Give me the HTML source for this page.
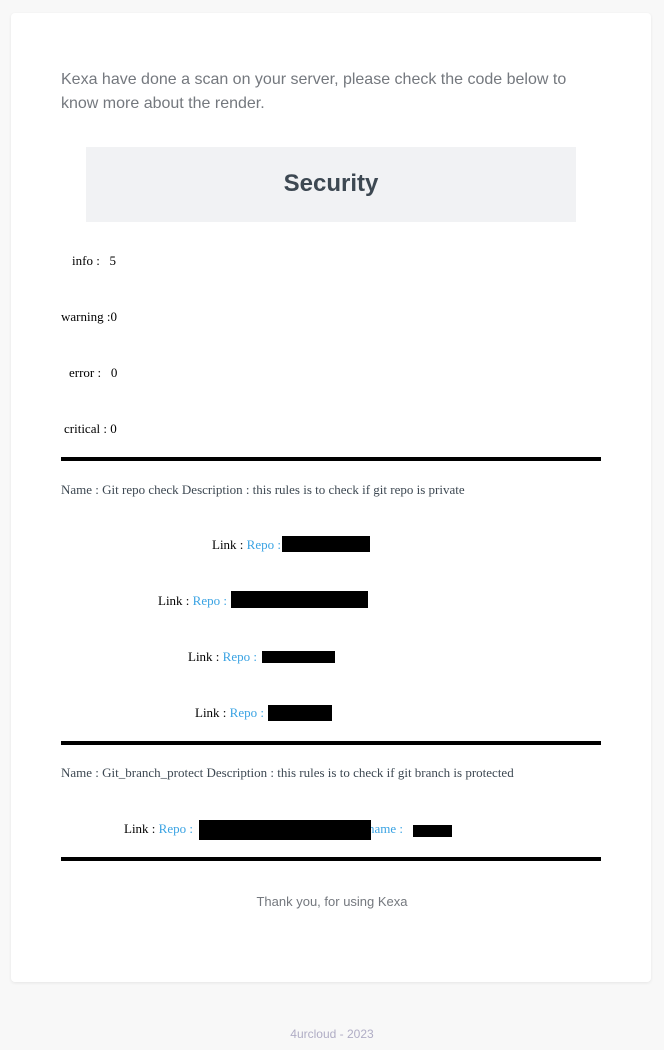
<!DOCTYPE html>
<html><head><meta charset="utf-8"><style>
body{margin:0;width:664px;height:1050px;background:#f8f8f8;position:relative;overflow:hidden;font-family:"Liberation Serif",serif}
.card{position:absolute;left:11px;top:13px;width:640px;height:969px;background:#fff;border-radius:4px;box-shadow:0 1px 3px rgba(0,0,0,.08)}
.a{position:absolute;white-space:nowrap;line-height:1}
.s{font-family:"Liberation Sans",sans-serif}
.t{font-size:13px;color:#000}
.g{font-size:13px;color:#3d4852}
.b{color:#3aa3e3}
.hr{position:absolute;left:61px;width:540px;height:4px;background:#000}
</style></head><body>
<div class="card"></div>
<div class="a s" style="left:61px;top:68px;font-size:16px;color:#74787e;line-height:24px">Kexa have done a scan on your server, please check the code below to<br>know more about the render.</div>
<div class="a" style="left:86px;top:147px;width:490px;height:75px;background:#f1f2f4"></div>
<div class="a s" style="left:86px;top:172px;width:490px;text-align:center;font-size:24px;font-weight:bold;color:#3d4852">Security</div>
<div class="a t" style="left:72px;top:254px">info : &nbsp; 5</div>
<div class="a t" style="left:61px;top:310px">warning :0</div>
<div class="a t" style="left:69px;top:366px">error : &nbsp; 0</div>
<div class="a t" style="left:64px;top:422px">critical : 0</div>
<div class="hr" style="top:457px"></div>
<div class="a g" style="left:61px;top:483px">Name : Git repo check Description : this rules is to check if git repo is private</div>
<div class="a t" style="left:212px;top:538px">Link : <span class="b">Repo : </span></div>
<div class="a" style="left:282px;top:536px;width:88px;height:16px;background:#000"></div>
<div class="a t" style="left:158px;top:594px">Link : <span class="b">Repo : </span></div>
<div class="a" style="left:231px;top:591px;width:137px;height:17px;background:#000"></div>
<div class="a t" style="left:188px;top:650px">Link : <span class="b">Repo : </span></div>
<div class="a" style="left:262px;top:651px;width:73px;height:12px;background:#000"></div>
<div class="a t" style="left:195px;top:706px">Link : <span class="b">Repo : </span></div>
<div class="a" style="left:268px;top:705px;width:64px;height:16px;background:#000"></div>
<div class="hr" style="top:741px"></div>
<div class="a g" style="left:61px;top:766px">Name : Git_branch_protect Description : this rules is to check if git branch is protected</div>
<div class="a t" style="left:124px;top:822px">Link : <span class="b">Repo : </span></div>
<div class="a t b" style="left:368px;top:822px">name : </div>
<div class="a" style="left:199px;top:820px;width:172px;height:20px;background:#000"></div>
<div class="a" style="left:413px;top:825px;width:39px;height:12px;background:#000"></div>
<div class="hr" style="top:857px"></div>
<div class="a s" style="left:0;width:664px;text-align:center;top:895px;font-size:13px;color:#74787e">Thank you, for using Kexa</div>
<div class="a s" style="left:0;width:664px;text-align:center;top:1028px;font-size:12px;color:#b0adc5">4urcloud - 2023</div>
</body></html>
